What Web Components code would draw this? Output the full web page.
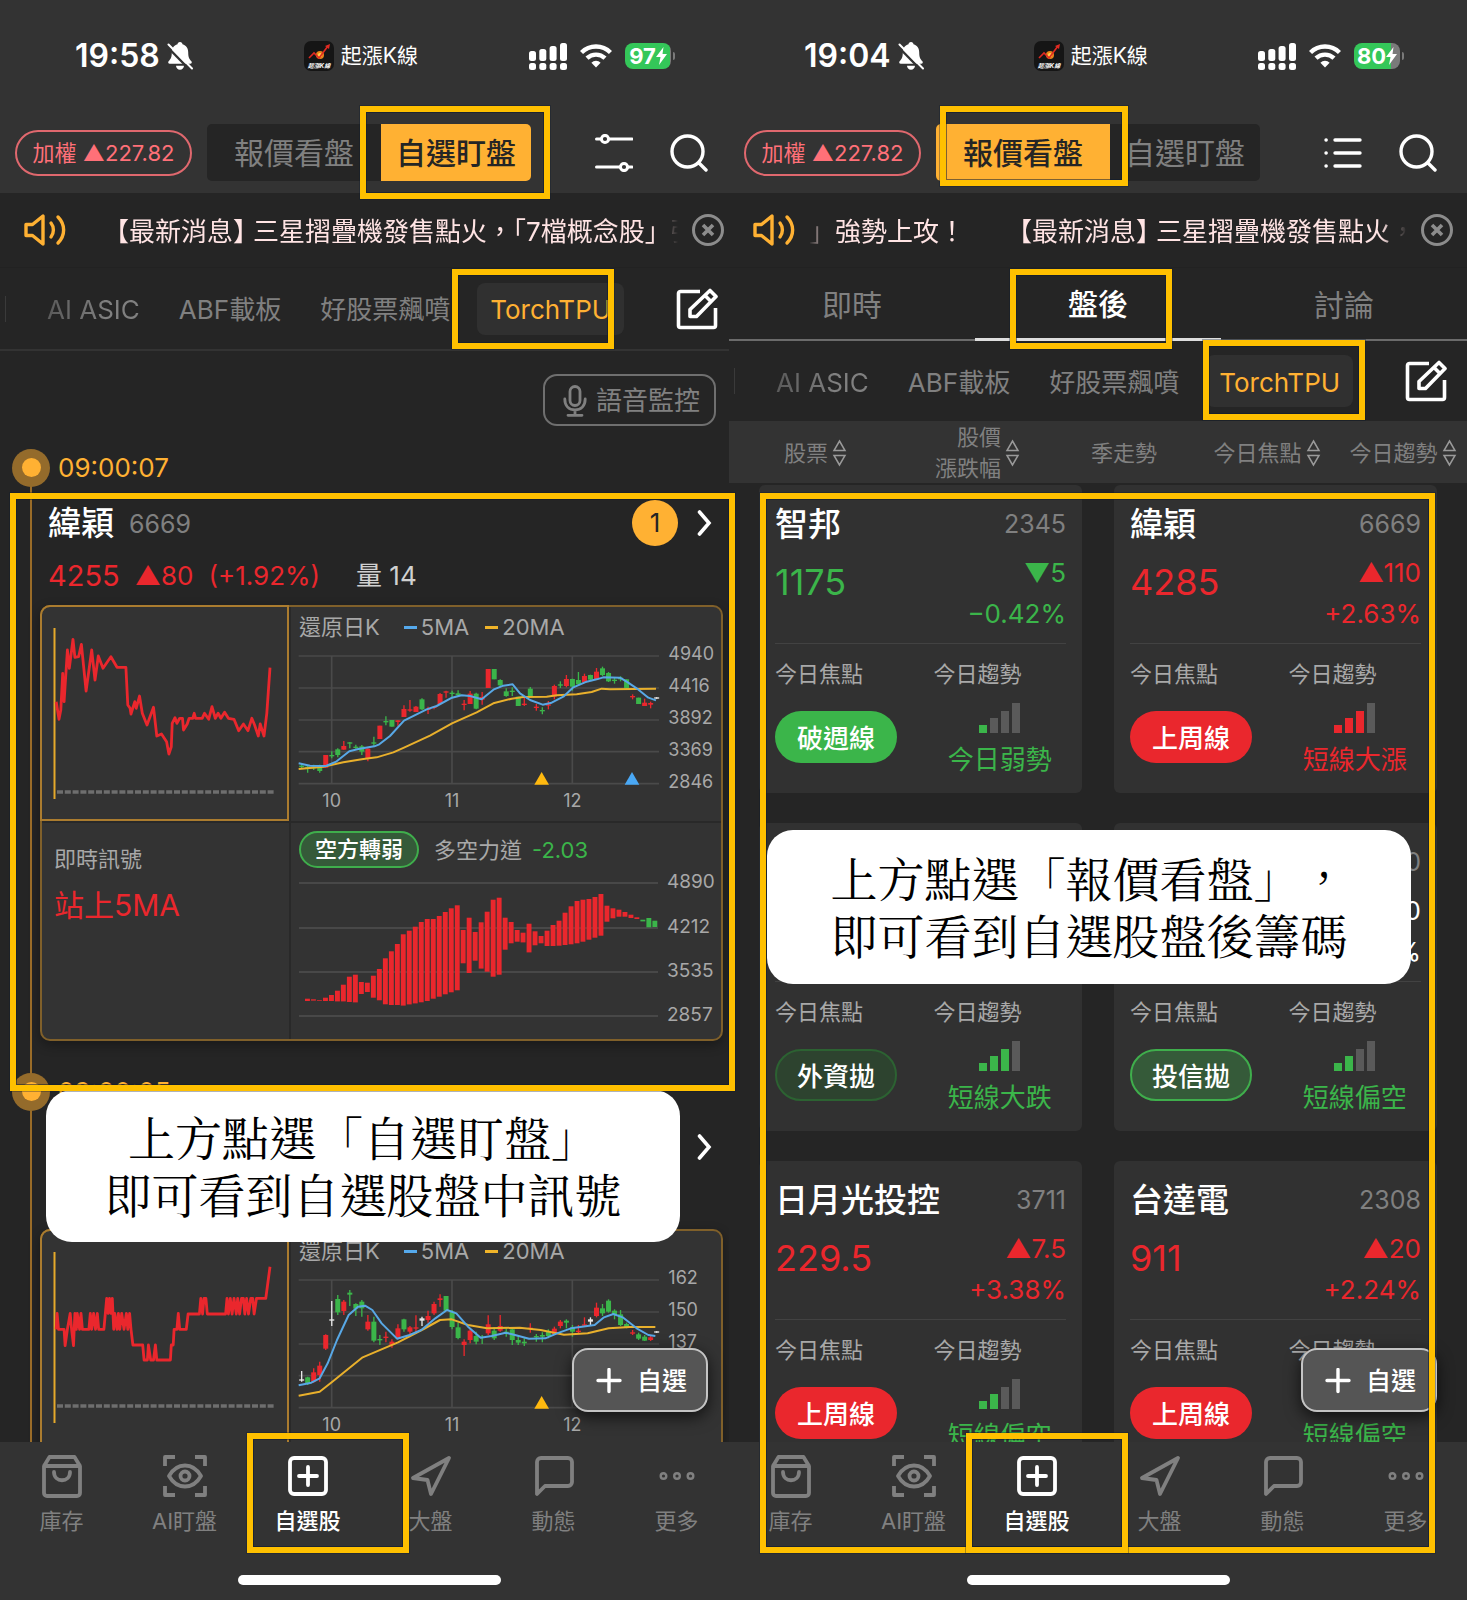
<!DOCTYPE html>
<html lang="zh-Hant">
<head>
<meta charset="utf-8">
<meta name="viewport" content="width=device-width, initial-scale=1">
<title>起漲K線 自選股</title>
<style>
  :root {
    --bg: #252525; --panel: #333333; --dim: #808080; --text: #a8a8a8;
    --amber: #ffb133; --up: #ea272d; --down: #3bb54a; --mark: #ffc000;
  }
  * { box-sizing: border-box; }
  body {
    margin: 0; height: 100vh; min-height: 1100px; overflow: hidden; position: relative;
    display: flex; background: var(--bg); color: #fff;
    font: 26px/32px Inter, "Noto Sans CJK TC", sans-serif;
  }
  phone-screen { flex: 1 1 0; min-width: 0; }
  phone-screen + phone-screen { margin-left: -9px; z-index: 1; }
</style>
</head>
<body>
  <phone-screen>
    <status-bar slot="top" time="19:58" battery="97"></status-bar>
    <market-header slot="top" active="watch"></market-header>
    <news-ticker slot="top" mode="start"></news-ticker>
    <group-tabs slot="top" lined></group-tabs>
    <voice-bar></voice-bar>
    <signal-item time="09:00:07" name="緯穎" code="6669" count="1" price="4255" change="▲80" percent="(+1.92%)" volume="量 14" signal="站上5MA" force="-2.03" series="a"></signal-item>
    <signal-item time="09:00:05" series="b"></signal-item>
  </phone-screen>

  <phone-screen>
    <status-bar slot="top" time="19:04" battery="80"></status-bar>
    <market-header slot="top" active="quote"></market-header>
    <news-ticker slot="top" mode="loop"></news-ticker>
    <section-tabs slot="top"></section-tabs>
    <group-tabs slot="top"></group-tabs>
    <sort-head slot="top"></sort-head>
    <quote-grid>
      <quote-card name="智邦" code="2345" price="1175" change="▼5" percent="−0.42%" dir="down" focus="破週線" pill="green" level="1" trend="今日弱勢" trend-dir="down"></quote-card>
      <quote-card name="緯穎" code="6669" price="4285" change="▲110" percent="+2.63%" dir="up" focus="上周線" pill="red" level="3" trend="短線大漲" trend-dir="up"></quote-card>
      <quote-card focus="外資拋" pill="faint" level="3" trend="短線大跌" trend-dir="down"></quote-card>
      <quote-card code="0" change="0" percent="%" dir="flat" focus="投信拋" pill="outline" level="2" trend="短線偏空" trend-dir="down"></quote-card>
      <quote-card name="日月光投控" code="3711" price="229.5" change="▲7.5" percent="+3.38%" dir="up" focus="上周線" pill="red" level="2" trend="短線偏空" trend-dir="down"></quote-card>
      <quote-card name="台達電" code="2308" price="911" change="▲20" percent="+2.24%" dir="up" focus="上周線" pill="red" level="2" trend="短線偏空" trend-dir="down"></quote-card>
    </quote-grid>
  </phone-screen>

  <note-layer></note-layer>

<script>
const define = (name, css, html) => customElements.define(name, class extends HTMLElement {
  constructor() { super(); this.attachShadow({ mode: 'open' }); }
  connectedCallback() {
    const get = (key) => this.getAttribute(key) || '';
    this.shadowRoot.innerHTML = `<style>
      *,*::before{box-sizing:border-box}
      :host{display:block}
      button{font:inherit;color:inherit;background:none;border:0;padding:0;margin:0}
      a{color:inherit;text-decoration:none}
      svg{display:block;flex:none}
      ${css}</style>${html(get)}`;
  }
});

define('phone-screen', `
  :host{position:relative;display:flex;flex-direction:column;height:100%;background:var(--bg);overflow:hidden}
  main{flex:1;min-height:0;overflow:hidden}
`, () => `<slot name="top"></slot><main><slot></slot></main><add-button></add-button><bottom-nav></bottom-nav>`);

define('status-bar', `
  :host{display:flex;align-items:center;justify-content:space-between;height:112px;padding:0 67px 0 75px;background:var(--panel)}
  div{display:flex;align-items:center}
  .time{font-size:32px;font-weight:600;gap:7px}
  .app{font-size:21px;gap:7px}
  .sys{gap:13px}
  .bat{position:relative;width:46px;height:26px;border-radius:8px;justify-content:center;font-size:22px;font-weight:700;line-height:26px;
    background:linear-gradient(90deg,#34c759 var(--lvl),#7a7a7a var(--lvl))}
  .bat::after{content:"";position:absolute;right:-4px;top:9px;width:2px;height:8px;border-radius:0 2px 2px 0;background:#7a7a7a}
`, g => `
  <div class="time"><span>${g('time')}</span>
    <svg width="26" height="28" viewBox="0 0 26 28"><path d="M13 0c1.500 0 2.500 1 2.500 2.300 3.800 1.100 5.700 4.200 5.700 7.900 0 5 1 6.600 3.200 9 .8.900.3 2.600-1.200 2.600H2.800c-1.500 0-2-1.700-1.200-2.600 2.200-2.400 3.200-4 3.200-9 0-3.700 1.900-6.800 5.700-7.900C10.500 1 11.500 0 13 0zM9 23.800h8c0 2.200-1.800 4-4 4s-4-1.800-4-4z" fill="#fff"/><path d="M-.5 4 23 28" stroke="#333" stroke-width="2.400"/><path d="M1.500 2.500 25 26.500" stroke="#fff" stroke-width="2" stroke-linecap="round"/></svg></div>
  <div class="app"><svg width="30" height="30" viewBox="0 0 30 30"><rect width="30" height="30" rx="7" fill="#151515"/><circle cx="16" cy="14" r="4" fill="#e8801a"/><circle cx="16" cy="14" r="2" fill="#ffd34d"/><path d="M5 17l5-5 5 5 9-12" fill="none" stroke="#e02a22" stroke-width="1.600"/><path d="M26 3l-1 5-4-3z" fill="#e02a22"/><text x="15" y="27" text-anchor="middle" font-size="6" font-style="italic" font-weight="700" fill="#fff">起漲K線</text></svg><span>起漲K線</span></div>
  <div class="sys">
    <svg width="38" height="27" viewBox="0 0 38 27" fill="#fff"><rect x="0" y="8" width="7" height="10" rx="2.500"/><rect x="10.300" y="6" width="7" height="12" rx="2.500"/><rect x="20.600" y="3" width="7" height="15" rx="2.500"/><rect x="31" y="0" width="7" height="18" rx="2.500"/><rect x="0" y="20" width="7" height="7" rx="2.500"/><rect x="10.300" y="20" width="7" height="7" rx="2.500"/><rect x="20.600" y="20" width="7" height="7" rx="2.500"/><rect x="31" y="20" width="7" height="7" rx="2.500"/></svg>
    <svg width="32" height="24" viewBox="0 0 32 24" fill="none" stroke="#fff" stroke-width="4.400"><path d="M1.500 8.500a20.500 20.500 0 0 1 29 0"/><path d="M7 14.200a13 13 0 0 1 18 0"/><path d="M16 23.500l-4.600-4.800a6.600 6.600 0 0 1 9.200 0z" fill="#fff" stroke="none"/></svg>
    <div class="bat" style="--lvl:${g('battery')}%"><span>${g('battery')}</span><svg width="11" height="18" viewBox="0 0 11 18"><path d="M7.500 0 0 10h4.500L3 18l8-11H6.500z" fill="#fff"/></svg></div>
  </div>`);

define('market-header', `
  :host{display:flex;align-items:center;height:81px;padding:0 30px 0 15px;gap:15px;background:var(--panel)}
  .index{width:177px;height:46px;border:2px solid #e0686e;border-radius:23px;color:#ff7078;font-size:22px;line-height:40px;white-space:nowrap}
  .seg{display:flex;flex:0 0 324px;height:57px;border-radius:5px;overflow:hidden;background:var(--bg);color:var(--dim);font-size:30px}
  .seg button{flex:150}
  .seg button:first-child{flex:174}
  .seg .on{background:var(--amber);color:#252525;font-weight:500}
  .tools{display:flex;gap:37px;margin-left:auto}
  .tools svg{fill:none;stroke:#fff;stroke-width:3.400;stroke-linecap:round}
`, g => {
  const quote = g('active') === 'quote';
  return `
  <button class="index">加權 ▲227.82</button>
  <div class="seg"><button class="${quote ? 'on' : ''}">報價看盤</button><button class="${quote ? '' : 'on'}">自選盯盤</button></div>
  <div class="tools">
    <button aria-label="檢視"><svg width="38" height="38" viewBox="0 0 38 38">${quote
      ? '<path d="M11 6h25M11 19h25M11 32h25M2 6h.2M2 19h.2M2 32h.2"/>'
      : '<g stroke-width="3"><path d="M1.500 5h4.500M14 5h23M1.500 33h23M33 33h4"/><circle cx="10" cy="5" r="3.600"/><circle cx="29" cy="33" r="3.600"/></g>'}</svg></button>
    <button aria-label="搜尋"><svg width="38" height="38" viewBox="0 0 38 38"><circle cx="17.500" cy="17.500" r="15.500"/><path d="M29 29l7 7"/></svg></button>
  </div>`;
});

define('news-ticker', `
  :host{display:flex;align-items:center;height:75px;padding:0 14px 0 24px;background:var(--bg);border-bottom:1px solid #222}
  .view{flex:1;min-width:0;margin:0 14px;padding-top:3px;overflow:hidden;white-space:nowrap;display:flex;gap:54px;color:#ffe4e4;
    -webkit-mask-image:linear-gradient(90deg,transparent,#000 20px,#000 calc(100% - 26px),transparent);mask-image:linear-gradient(90deg,transparent,#000 20px,#000 calc(100% - 26px),transparent)}
  .start{padding-left:36px}
  b{font-weight:400;font-feature-settings:"halt"}
  b.end{margin-right:7px}
`, g => {
  const item = '<span><b>【</b>最新消息<b class="end">】</b>三星摺疊機發售點火，<b>「</b>7檔概念股」強勢上攻！</span>';
  return `
  <svg width="42" height="32" viewBox="0 0 42 32" fill="none" stroke="#ffb133" stroke-width="3.400" stroke-linejoin="round" stroke-linecap="round"><path d="M2 10.500h6.500L19 2v28L8.500 21.500H2z"/><path d="M27 9c3.200 4 3.200 10 0 14M34 3c7.500 7.500 7.500 18.500 0 26"/></svg>
  <div class="view ${g('mode')}">${g('mode') === 'loop' ? '<span>」強勢上攻！</span>' : ''}${item}</div>
  <button aria-label="關閉"><svg width="32" height="32" viewBox="0 0 32 32" fill="none" stroke="#8c8c8c" stroke-width="3"><circle cx="16" cy="16" r="14.500"/><path d="M11 11l10 10M21 11 11 21" stroke-width="3.600"/></svg></button>`;
});

define('section-tabs', `
  :host{display:flex;height:73px;font-size:30px;color:var(--dim)}
  button{flex:1;padding-top:2px;border-bottom:2px solid #6b6b6b}
  .on{color:#fff;font-weight:500;border-bottom:3px solid #dedede}
`, () => `<button>即時</button><button class="on">盤後</button><button>討論</button>`);

define('group-tabs', `
  :host{display:flex;align-items:center;height:80px;padding:0 20px 0 47px;color:var(--dim);white-space:nowrap;position:relative}
  :host([lined]){height:83px;border-bottom:2px solid #333}
  :host::before{content:"";position:absolute;left:5px;width:1px;height:26px;background:#3a3a3a}
  button{margin-right:39px;padding-top:3px}
  .first{background:linear-gradient(90deg,#5a5a5a,#808080 60px);-webkit-background-clip:text;background-clip:text;color:transparent}
  .long{margin-right:27px}
  .on{flex:0 0 147px;height:52px;border-radius:8px;background:#303030;color:var(--amber);margin:0}
  .edit{margin:0 0 0 auto;padding:0}
`, () => `
  <button class="first">AI ASIC</button><button>ABF載板</button><button class="long">好股票飆噴</button><button class="on">TorchTPU</button>
  <button class="edit" aria-label="編輯"><svg width="42" height="42" viewBox="0 0 42 42" fill="none" stroke="#fff" stroke-width="3.600" stroke-linejoin="round"><path d="M24 3.500H4.500a2 2 0 0 0-2 2v32a2 2 0 0 0 2 2h33a2 2 0 0 0 2-2V20"/><path d="M14 28.500v-7L34 2.500l6 6L20.500 28.500z"/><path d="M29 7.500l6 6"/></svg></button>`);

define('voice-bar', `
  :host{display:flex;justify-content:flex-end;padding:23px 22px 23px 0}
  button{display:flex;align-items:center;gap:9px;height:52px;padding:2px 14px 0 18px;border:2px solid #6f6f6f;border-radius:14px;color:var(--dim)}
`, () => `<button><svg width="24" height="32" viewBox="0 0 24 32" fill="none" stroke="#808080" stroke-width="2.800" stroke-linecap="round"><rect x="7" y="1.500" width="10" height="19" rx="5"/><path d="M1.800 14c0 7 4.200 11 10.200 11s10.200-4 10.200-11M12 25v5M5 30.300h14"/></svg>語音監控</button>`);

define('sort-head', `
  :host{display:grid;grid-template-columns:173fr 151fr 142fr 144fr 128fr;height:62px;background:#333;color:var(--dim);font-size:22px}
  button{display:flex;align-items:center;justify-content:center;gap:4px;padding-top:1px;text-align:right;line-height:31px;white-space:nowrap}
`, () => {
  const arrows = '<svg width="15" height="28" viewBox="0 0 15 28" fill="none" stroke="#9a9a9a" stroke-width="1.500"><path d="M7.500 2 13 11.500H2zM7.500 26 2 16.500h11z"/></svg>';
  return `<button><span>股票</span>${arrows}</button><button><span>股價<br>漲跌幅</span>${arrows}</button><button><span>季走勢</span></button><button><span>今日焦點</span>${arrows}</button><button><span>今日趨勢</span>${arrows}</button>`;
});

define('quote-grid', `
  :host{display:grid;grid-template-columns:1fr 1fr;gap:30px 32px;padding:2px 30px 30px}
`, () => `<slot></slot>`);

define('quote-card', `
  :host{background:#313131;border-radius:6px;padding:16px}
  .row{display:flex;justify-content:space-between}
  .name{font-size:33px;line-height:46px;font-weight:500;height:46px}
  .code{font-size:25px;color:var(--dim);line-height:46px}
  .quote{margin-top:5px;height:82px}
  .price{font-size:36px;line-height:60px}
  .chg{text-align:right;line-height:41px}
  .up{color:var(--up)} .down{color:var(--down)} .flat{color:#fff}
  .info{display:grid;grid-template-columns:158fr 132fr;margin-top:9px;padding-top:14px;border-top:1px solid #424242}
  .cap{font-size:22px;line-height:32px;color:var(--text)}
  .pill{width:122px;height:52px;margin-top:21px;padding-top:3px;border-radius:26px;display:flex;align-items:center;justify-content:center;font-weight:500;color:#fff}
  .red{background:var(--up)} .green{background:var(--down)}
  .outline{background:#355a39;border:2px solid #3fae4c} .faint{background:#2d432f;border:2px solid #2c6232}
  .trend{text-align:center;line-height:34px}
  .bars{display:flex;align-items:flex-end;justify-content:center;gap:3px;height:30px;margin:13px 0 10px}
  i{width:8px;background:#5a5a5a}
  i:nth-child(1){height:8px} i:nth-child(2){height:15px} i:nth-child(3){height:22px} i:nth-child(4){height:30px}
  i.lit{background:currentColor}
`, g => `
  <div class="row"><span class="name">${g('name')}</span><span class="code">${g('code')}</span></div>
  <div class="row quote ${g('dir')}"><span class="price">${g('price')}</span><span class="chg">${g('change')}<br>${g('percent')}</span></div>
  <div class="info">
    <div><div class="cap">今日焦點</div><div class="pill ${g('pill')}">${g('focus')}</div></div>
    <div><div class="cap">今日趨勢</div><div class="trend ${g('trend-dir')}"><div class="bars">${[1, 2, 3, 4].map(n => `<i class="${n <= +g('level') ? 'lit' : ''}"></i>`).join('')}</div>${g('trend')}</div></div>
  </div>`);

define('add-button', `
  :host{position:absolute;right:30px;bottom:188px;z-index:2}
  button{display:flex;align-items:center;gap:15px;height:64px;padding:2px 19px 0 22px;border:2px solid #c4c4c4;border-radius:16px;background:#555;color:#fff;font-size:25px;font-weight:500;box-shadow:0 5px 16px #000a}
`, () => `<button><svg width="26" height="26" viewBox="0 0 26 26" stroke="#fff" stroke-width="3.400" stroke-linecap="round"><path d="M13 1.500v22M2 12.500h22"/></svg>自選</button>`);

define('bottom-nav', `
  :host{height:158px;background:var(--panel);position:relative;z-index:1;flex:none}
  nav{display:grid;grid-template-columns:repeat(6,1fr);height:133px;padding-top:12px}
  a{display:flex;flex-direction:column;align-items:center;gap:7px;color:var(--dim);font-size:22px;line-height:32px}
  a.on{color:#fff;font-weight:500}
  svg{fill:none;stroke:currentColor;stroke-width:3.800;stroke-linejoin:round}
  .home{width:263px;height:10px;border-radius:5px;background:#fff;margin:0 auto}
`, () => {
  const icons = [
    ['庫存', '<path d="M4 12 9.500 3h25L40 12M4 12h36v27a3 3 0 0 1-3 3H7a3 3 0 0 1-3-3z"/><path d="M14 18c0 11 16 11 16 0" stroke-linecap="round"/>'],
    ['AI盯盤', '<path d="M2 12V3H12M32 3h10v9M42 32v9H32M12 41H2v-9"/><path d="M6 22c8-14 24-14 32 0-8 14-24 14-32 0z"/><circle cx="22" cy="22" r="4.500"/>'],
    ['自選股', '<rect x="4" y="4" width="36" height="36" rx="4"/><path d="M22 13v18M13 22h18" stroke-linecap="round"/>'],
    ['大盤', '<path d="M40 4 4 24l14.500 2L22 40z"/>'],
    ['動態', '<path d="M5 40V8a4 4 0 0 1 4-4h27a4 4 0 0 1 4 4v20a4 4 0 0 1-4 4H13z"/>'],
    ['更多', '<g stroke-width="2.400"><circle cx="8.500" cy="22" r="2.800"/><circle cx="22" cy="22" r="2.800"/><circle cx="35.500" cy="22" r="2.800"/></g>'],
  ];
  return `<nav>${icons.map(([label, shape], n) => `<a href="#" class="${n === 2 ? 'on' : ''}"><svg width="44" height="44" viewBox="0 0 44 44">${shape}</svg>${label}</a>`).join('')}</nav><div class="home"></div>`;
});

define('signal-item', `
  :host{position:relative;padding-bottom:32px}
  :host::before{content:"";position:absolute;left:30px;top:19px;bottom:-19px;width:2px;background:#9a6c28}
  .time{display:flex;align-items:center;gap:8px;height:37px;padding-left:12px;color:var(--amber);position:relative}
  .dot{width:38px;height:38px;border-radius:50%;background:#946b2b;display:grid;place-items:center}
  .dot::before{content:"";width:19px;height:19px;border-radius:50%;background:var(--amber)}
  .title{display:flex;align-items:center;height:48px;margin-top:13px;padding:0 25px 0 48px;gap:15px}
  .name{font-size:33px;font-weight:500}
  .code{font-size:25px;padding-top:2px;color:var(--dim)}
  .count{width:46px;height:46px;border-radius:50%;background:var(--amber);color:#252525;text-align:center;line-height:46px;margin-left:auto}
  .go{margin-left:auto}
  .count + .go{margin-left:4px}
  .price{display:flex;align-items:center;gap:15px;height:40px;margin:9px 0;padding-left:48px;color:var(--up)}
  .price b{font-weight:400;font-size:29px}
  .vol{color:#d0d0d0;margin-left:21px}
  .card{display:grid;grid-template-columns:247fr 432fr;margin:0 15px 0 40px;height:436px;grid-template-rows:214fr 218fr;border:2px solid #80602a;border-radius:10px;background:#333;box-shadow:0 4px 12px #0005}
  .card > *{min-width:0}
  .day{margin:-2px 0 0 -2px;border:2px solid #ab7c2f;border-radius:10px 0 0 0;overflow:hidden}
  .k,.force{border-left:2px solid #292929}
  .sig,.force{border-top:2px solid #292929}
  .legend{display:flex;align-items:center;height:40px;padding-left:8px;font-size:22px;color:var(--text);white-space:nowrap}
  .legend i{width:13px;height:3px;margin:0 4px 0 16px;background:#f0b429}
  .legend i:first-of-type{margin-left:24px;background:#55a9ec}
  .sig{padding:20px 12px;font-size:22px;color:var(--text)}
  .sig b{display:block;margin-top:12px;font-size:30px;line-height:36px;font-weight:400;color:var(--up)}
  .fhead{display:flex;align-items:center;height:37px;margin:8px 0 4px 8px;font-size:22px;color:var(--text);white-space:nowrap}
  .tag{height:37px;width:120px;text-align:center;line-height:33px;border:2px solid #3fae4c;border-radius:19px;background:#355a39;color:#fff;font-weight:500;margin-right:15px}
  .fhead em{font-style:normal;color:var(--down);margin-left:10px}
`, g => `
  <div class="time"><span class="dot"></span><span>${g('time')}</span></div>
  <div class="title"><span class="name">${g('name')}</span><span class="code">${g('code')}</span>${g('count') ? `<span class="count">${g('count')}</span>` : ''}<button class="go" aria-label="展開"><svg width="16" height="28" viewBox="0 0 16 28" fill="none" stroke="#fff" stroke-width="3.600" stroke-linecap="round"><path d="M2.500 3 12 14 2.500 25"/></svg></button></div>
  <div class="price"><b>${g('price')}</b><span>${g('change')}</span><span>${g('percent')}</span><span class="vol">${g('volume')}</span></div>
  <div class="card">
    <div class="day"><day-line series="${g('series')}"></day-line></div>
    <div class="k"><div class="legend"><span>還原日K</span><i></i><span>5MA</span><i></i><span>20MA</span></div><k-chart series="${g('series')}"></k-chart></div>
    ${g('signal') ? `<div class="sig">即時訊號<b>${g('signal')}</b></div>
    <div class="force"><div class="fhead"><span class="tag">空方轉弱</span><span>多空力道</span><em>${g('force')}</em></div><force-chart></force-chart></div>` : ''}
  </div>`);

const dayLines = {
  a: { base: 606, pts: '120,335 126,388 130,360 134,250 137,335 144,180 148,235 156,148 160,202 168,200 174,163 184,303 196,180 203,270 210,198 220,235 237,200 250,232 269,232 273,345 278,355 280,372 288,335 291,355 298,318 304,370 314,405 328,352 335,438 345,432 356,455 361,492 366,470 368,400 374,383 378,400 384,385 390,385 392,420 400,402 404,385 412,385 415,370 418,385 432,385 437,370 446,388 453,350 460,385 466,370 472,385 480,367 488,385 500,388 510,422 520,402 530,422 538,385 544,405 552,438 556,402 564,438 570,370 577,233' },
  b: { base: 576, pts: '120,346 122,298 125,346 137,346 139,395 144,346 150,298 153,346 157,395 160,298 163,346 165,298 170,346 173,298 176,346 190,346 193,298 196,346 200,298 204,346 208,298 211,346 222,346 228,253 231,298 234,253 237,298 240,253 243,346 245,298 250,346 253,298 256,346 260,298 265,346 270,298 273,346 277,298 280,346 284,393 305,393 308,438 315,438 317,393 322,438 328,438 332,393 335,438 364,438 366,393 370,393 372,346 378,346 381,298 384,346 398,346 402,300 426,300 429,253 433,300 436,253 440,253 443,300 482,300 485,253 488,300 492,253 496,300 500,253 505,300 508,253 512,300 516,253 520,253 523,300 527,253 531,300 536,253 540,253 543,300 548,253 568,253 577,158' },
};
define('day-line', `svg{width:100%}`, g => {
  const { base, pts } = dayLines[g('series')];
  const line = pts.split(' ').map(p => p.split(',')).map(([x, y]) => `${(x * 0.468 - 42).toFixed(1)},${(y / 3 - 17).toFixed(1)}`).join(' ');
  const y = base / 3 - 17;
  return `<svg viewBox="0 0 245 211" fill="none"><path d="M12.500 21V192" stroke="#e5a92b" stroke-width="2"/><path d="M15 ${y}H232" stroke="#6e6e6e" stroke-width="3.400" stroke-dasharray="6 1.800"/><polyline points="${line}" stroke="#ea272d" stroke-width="2.800" stroke-linejoin="round"/></svg>`;
});

// Candles: colour, high, low, body top, body bottom; one slot per trading day.
const kCharts = {
  a: {
    ticks: [4940, 4416, 3892, 3369, 2846], marks: [[755, '#ffb90f'], [1026, '#4aa8f5']],
    k: 'g 492 504 497 501;g 496 518 500 507;g 494 510 499 505;g 494 518 497 513;r 465 503 465 503;g 454 475 465 467;g 445 472 448 465;r 423 449 438 449;g 426 445 427 430;g 434 446 440 444;g 435 465 439 455;r 445 484 446 475;g 410 437 427 430;r 377 417 377 417;g 349 376 363 366;g 360 380 360 380;r 361 377 361 366;r 316 351 327 351;r 300 335 328 331;r 318 336 320 336;g 295 330 298 328;r 320 342 326 329;r 318 328 320 324;r 279 312 282 312;r 272 293 274 277;g 272 292 278 281;g 271 291 280 286;r 300 331 311 314;r 273 312 281 312;g 278 328 281 326;r 276 314 291 299;r 207 264 207 264;g 207 238 207 238;g 238 262 240 256;g 265 290 274 288;g 262 288 272 275;g 290 318 290 318;r 288 318 311 314;g 261 290 266 290;r 312 332 320 324;g 322 343 330 333;r 303 328 313 316;r 254 298 258 290;g 244 264 253 256;r 225 262 237 258;g 236 272 237 260;g 216 258 240 253;r 221 248 228 248;g 224 240 225 239;r 204 240 215 238;g 200 229 205 225;g 216 246 219 244;g 234 251 239 243;g 229 244 233 238;g 238 268 238 265;r 283 298 288 291;g 293 312 293 312;r 296 318 308 318;r 305 325 309 314;w 292 296 292 296',
    ma5: '26,490 60,497 108,498 140,484 178,454 205,447 253,439 268,433 300,408 342,362 410,328 440,318 486,293 515,286 540,288 575,298 612,268 640,257 668,253 690,280 720,300 758,314 785,308 820,290 850,262 890,245 920,238 940,232 990,233 1010,245 1040,265 1075,293 1098,301',
    ma20: '26,507 100,500 160,487 220,477 260,472 310,457 342,443 420,407 486,370 560,337 610,310 665,296 700,291 770,290 800,286 860,283 905,276 935,266 960,268 1098,266',
  },
  b: {
    ticks: [162, 150, 137], marks: [[755, '#ffb90f']],
    k: 'w 441 473 466 470;g 458 483 460 478;r 433 476 445 473;r 413 473 425 453;r 331 378 333 374;w 231 306 286 290;g 213 273 225 265;r 228 273 233 261;g 198 246 206 212;g 238 276 240 254;g 228 278 233 253;r 273 320 293 316;g 278 355 293 350;g 333 363 345 349;r 323 355 338 341;r 346 371 353 363;r 301 346 313 343;g 284 323 286 316;r 306 330 310 323;r 274 328 310 314;w 278 306 283 290;r 260 296 276 288;r 233 273 240 268;r 211 248 223 228;g 216 260 216 260;g 258 316 263 309;g 296 346 310 342;r 346 396 353 363;r 313 358 320 348;g 323 361 336 353;g 333 360 338 342;r 274 333 301 328;g 310 348 320 343;r 273 323 306 320;g 313 338 323 326;g 310 363 316 348;g 333 363 348 356;g 343 366 353 358;r 298 326 311 315;g 330 353 336 339;g 325 355 333 338;g 316 343 321 336;r 308 333 314 330;r 288 313 293 306;g 286 313 290 296;g 303 338 310 323;r 303 328 320 324;r 280 308 301 305;w 280 306 286 293;r 236 280 251 276;g 240 276 253 268;g 226 266 230 263;g 256 286 260 273;g 258 306 271 303;g 296 313 300 311;r 318 333 325 328;g 326 348 331 344;g 333 351 338 350;r 333 351 340 348;w 322 326 322 326',
    ma5: '26,484 64,476 89,463 113,418 141,348 176,273 204,248 225,245 247,258 275,298 321,344 359,333 394,318 436,283 471,258 499,268 534,308 572,341 605,336 647,326 675,333 717,344 766,343 801,328 843,313 914,303 942,280 970,270 998,280 1040,313 1075,333 1096,336',
    ma20: '26,515 89,503 127,473 218,400 324,355 401,315 450,288 485,286 534,303 591,313 689,311 752,318 822,332 893,328 956,313 1019,309 1096,309',
  },
};
define('k-chart', `svg{width:100%;overflow:visible} text{font-size:54px;fill:#a8a8a8}`, g => {
  const c = kCharts[g('series')];
  const tone = { g: '#3bb54a', r: '#ea272d', w: '#e8e8e8' };
  const rows = [168, 264, 360, 455, 551];
  const candles = c.k.split(';').map((row, n) => {
    const [t, hi, lo, top, bottom] = row.split(' ');
    const x = 35 + n * 18.05;
    return `<path d="M${x.toFixed(1)} ${hi}V${lo}" stroke="${tone[t]}" stroke-width="4"/><rect x="${(x - 7.5).toFixed(1)}" y="${top}" width="15" height="${Math.max(4, bottom - top)}" fill="${tone[t]}"/>`;
  }).join('');
  return `<svg viewBox="3 141 1290 519" fill="none">
    <path d="${rows.map(y => `M26 ${y}H1107`).join('')}M125 168V551M486 168V551M847 168V551" stroke="#4a4a4a" stroke-width="5"/>
    ${candles}
    <polyline points="${c.ma20}" stroke="#e9b02c" stroke-width="6" stroke-linejoin="round"/>
    <polyline points="${c.ma5}" stroke="#58a8e6" stroke-width="6" stroke-linejoin="round"/>
    ${c.marks.map(([x, f]) => `<path d="M${x} 516l22 38h-44z" fill="${f}"/>`).join('')}
    ${c.ticks.map((t, n) => `<text x="1135" y="${rows[n] + 13}">${t}</text>`).join('')}
    ${[10, 11, 12].map((t, n) => `<text x="${125 + n * 361}" y="622" text-anchor="middle">${t}</text>`).join('')}
  </svg>`;
});

const forceBars = '536-543,538-542,541-543,533-543,525-543,512-544,494-544,470-546,464-547,486-522,488-516,467-533,447-541,415-553,394-555,372-555,343-557,332-553,320-550,306-547,297-543,297-536,288-530,276-523,265-517,256-511,330-430,293-459,336-422,307-446,275-455,239-470,233-464,293-389,306-370,330-365,338-367,311-397,334-376,348-370,332-378,315-378,302-377,278-375,259-373,243-370,239-365,237-359,231-353,222-347,257-305,265-295,269-290,276-290,284-294,292-297,299-304,294-322,302-321';
define('force-chart', `svg{width:100%} text{font-size:19px;fill:#a8a8a8}`, () => {
  const lines = [[11, 4890], [56, 4212], [100, 3535], [144, 2857]];
  return `<svg viewBox="0 0 430 166" fill="none">
    <path d="${lines.map(([y]) => `M8 ${y}H367`).join('')}" stroke="#484848" stroke-width="2"/>
    ${forceBars.split(',').map((b, n) => {
      const [t, e] = b.split('-').map(v => v / 3 - 52);
      return `<rect x="${(14 + n * 5.99).toFixed(1)}" y="${t.toFixed(1)}" width="4.900" height="${(e - t).toFixed(1)}" fill="${n > 55 ? '#3bb54a' : '#ea272d'}"/>`;
    }).join('')}
    ${lines.map(([y, t]) => `<text x="376" y="${y + 5}">${t}</text>`).join('')}
  </svg>`;
});

define('note-layer', `
  :host{position:absolute;inset:0;z-index:5;pointer-events:none}
  .tip,.box{position:absolute}
  .tip{display:flex;align-items:center;justify-content:center;padding-bottom:4px;border-radius:26px;background:#fff;color:#000;text-align:center;
    font:47px/57px "Noto Serif CJK TC","PMingLiU","Noto Sans CJK TC",serif;white-space:nowrap;text-spacing-trim:space-all}
  .box{border:6px solid var(--mark);box-shadow:0 0 0 1px #0b1a3055,inset 0 0 0 1px #0b1a3088}
`, () => {
  const tips = [
    [46, 1090, 634, 152, '上方點選「自選盯盤」', '即可看到自選股盤中訊號'],
    [767, 830, 644, 154, '上方點選「報價看盤」，', '即可看到自選股盤後籌碼'],
  ];
  const boxes = [
    [360, 106, 190, 93], [452, 269, 162, 80], [10, 493, 725, 598], [247, 1433, 162, 120],
    [940, 106, 188, 80], [1010, 269, 162, 80], [1203, 340, 162, 80], [760, 493, 675, 1060], [966, 1433, 162, 120],
  ];
  const place = ([x, y, w, h]) => `left:${x}px;top:${y}px;width:${w}px;height:${h}px`;
  return tips.map(t => `<div class="tip" style="${place(t)}"><span>${t[4]}<br>${t[5]}</span></div>`).join('')
    + boxes.map(b => `<div class="box" style="${place(b)}"></div>`).join('');
});
</script>
</body>
</html>
